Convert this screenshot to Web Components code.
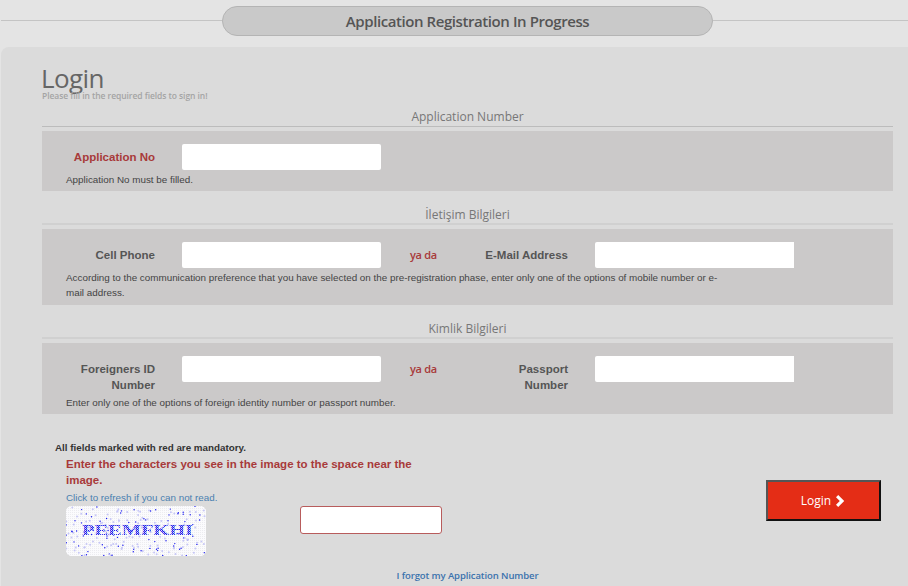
<!DOCTYPE html>
<html>
<head>
<meta charset="utf-8">
<title>Login</title>
<style>
    html, body { margin: 0; padding: 0; background: #e4e4e4; height: 586px; overflow: hidden; }
    body { font-family: "Liberation Sans", Arial, sans-serif; }
</style>
</head>
<body>
<progress-header>Application Registration In Progress</progress-header>
<login-panel heading="Login" sub="Please fill in the required fields to sign in!">
    <form-section heading="Application Number" top="6" note="Application No must be filled.">
        <form-field label="Application No" required></form-field>
    </form-section>
    <form-section heading="İletişim Bilgileri" top="14" soft pad="5" note="According to the communication preference that you have selected on the pre-registration phase, enter only one of the options of mobile number or e-mail address.">
        <form-field label="Cell Phone"></form-field>
        <form-field label="E-Mail Address" second></form-field>
    </form-section>
    <form-section heading="Kimlik Bilgileri" top="13.5" soft note="Enter only one of the options of foreign identity number or passport number.">
        <form-field label="Foreigners ID Number"></form-field>
        <form-field label="Passport Number" second></form-field>
    </form-section>
    <captcha-area></captcha-area>
</login-panel>

<script>
// Top bar: rounded title with a line running out on both sides
class ProgressHeader extends HTMLElement {
    constructor() {
        super();
        this.attachShadow({ mode: 'open' });
        this.shadowRoot.innerHTML = `
            <style>
                :host { display: flex; align-items: flex-start; height: 47px; padding-top: 6px; box-sizing: border-box; }
                .line { flex: 1; height: 1px; background: #c4c4c4; margin-top: 14px; }
                .line.start { flex: none; width: 221px; margin-left: 1px; }
                .pill {
                    width: 491px; height: 30px; box-sizing: border-box;
                    background: #c9c9c9; border: 1px solid #b4b4b4; border-radius: 15px;
                    display: flex; align-items: center; justify-content: center;
                    font: 600 15px/1 "Open Sans", sans-serif; letter-spacing: -0.42px; color: #555;
                }
            </style>
            <div class="line start"></div>
            <div class="pill"><slot></slot></div>
            <div class="line"></div>
        `;
    }
}

class LoginPanel extends HTMLElement {
    constructor() {
        super();
        this.attachShadow({ mode: 'open' });
    }

    connectedCallback() {
        this.shadowRoot.innerHTML = `
            <style>
                :host {
                    display: block; margin-left: 1px; height: 539px; box-sizing: border-box;
                    background: #dbdbdb; border-radius: 8px 0 0 0;
                    padding: 16px 15px 0 41px;
                }
                h1 { margin: 0 0 0 -1px; font: 400 26px/30px "Open Sans", sans-serif; letter-spacing: -0.6px; color: #666; }
                p { margin: -3px 0 0; font: 600 8.5px/12px "Open Sans", sans-serif; letter-spacing: -0.07px; color: #a4a4a4; }
            </style>
            <h1>${this.getAttribute('heading')}</h1>
            <p>${this.getAttribute('sub')}</p>
            <slot></slot>
        `;
    }
}

class FormSection extends HTMLElement {
    constructor() {
        super();
        this.attachShadow({ mode: 'open' });
    }

    connectedCallback() {
        const soft = this.hasAttribute('soft');
        this.shadowRoot.innerHTML = `
            <style>
                :host { display: block; margin-top: ${this.getAttribute('top') || 0}px; }
                h2 {
                    margin: 0; height: 18px; text-align: center;
                    font: 400 12px/${soft ? 19 : 17}px "Open Sans", sans-serif; color: #777;
                    border-bottom: ${soft ? '2px solid #d0d0d0' : '1px solid #bcbcbc'};
                }
                .block { margin-top: 4px; background: #cbc9c9; padding: 13px 0 ${this.getAttribute('pad') || 4}px; }
                .row { display: grid; grid-template-columns: repeat(2, max-content); column-gap: 27px; }
                .note {
                    margin: 2px 0 0 24px; width: 655px;
                    font: 9.85px/15px "Liberation Sans", Arial, sans-serif; color: #444;
                }
            </style>
            <h2>${this.getAttribute('heading')}</h2>
            <div class="block">
                <div class="row"><slot></slot></div>
                <div class="note">${this.getAttribute('note')}</div>
            </div>
        `;
    }
}

// Label and input; the second field of a row starts with the "ya da" marker
class FormField extends HTMLElement {
    constructor() {
        super();
        this.attachShadow({ mode: 'open' });
    }

    connectedCallback() {
        const second = this.hasAttribute('second');
        const required = this.hasAttribute('required');
        this.shadowRoot.innerHTML = `
            <style>
                :host { display: flex; align-items: flex-start; }
                .or { width: 26px; margin: 0 44px 0 2px; white-space: nowrap; font: 600 11px/26px "Open Sans", sans-serif; letter-spacing: -0.3px; color: #a83a3a; }
                label {
                    width: ${second ? 88 : 113}px; text-align: right; padding-top: 5px; box-sizing: border-box;
                    font: bold 11.5px/16px "Liberation Sans", Arial, sans-serif;
                    color: ${required ? '#a83a3a' : '#555'};
                }
                input {
                    width: 199px; height: 26px; margin: 0 0 0 27px; padding: 0; box-sizing: border-box;
                    background: #fff; border: 0; border-radius: ${second ? '2px 0 0 2px' : '2px'};
                }
            </style>
            ${second ? '<span class="or">ya da</span>' : ''}
            <label>${this.getAttribute('label')}</label>
            <input type="text">
        `;
    }
}

// Captcha picture drawn as svg: fixed-seed noise so every run looks the same
class CaptchaImage extends HTMLElement {
    constructor() {
        super();
        this.attachShadow({ mode: 'open' });
    }

    connectedCallback() {
        let seed = 4711;
        const rnd = () => (seed = (seed * 48271) % 2147483647) / 2147483647;
        let dots = '';
        for (let i = 0; i < 210; i++) {
            const strong = rnd() > 0.62;
            const x = (rnd() * 140).toFixed(1);
            const y = (rnd() * 50).toFixed(1);
            dots += `<circle cx="${x}" cy="${y}" r="${strong ? 0.7 : 1}" fill="${strong ? '#1a1af0' : '#c6c6f6'}"/>`;
        }
        this.shadowRoot.innerHTML = `
            <style>
                :host { display: block; width: 140px; height: 50px; border-radius: 6px; overflow: hidden; background: #fff; }
                svg { display: block; }
                text { font: bold 14px "Liberation Serif", serif; fill: url(#ink); }
            </style>
            <svg width="140" height="50" viewBox="0 0 140 50">
                <defs>
                    <pattern id="grain" width="2" height="2" patternUnits="userSpaceOnUse">
                        <rect width="2" height="2" fill="#fbfbfd"/>
                        <rect width="1" height="1" fill="#ececf0"/>
                    </pattern>
                    <pattern id="ink" width="2" height="2" patternUnits="userSpaceOnUse">
                        <rect width="2" height="2" fill="#1c1ce8"/>
                        <rect x="1" width="1" height="1" fill="#dcdcfa"/>
                        <rect y="1" width="1" height="1" fill="#8c8cf2"/>
                    </pattern>
                </defs>
                <rect width="140" height="50" fill="url(#grain)"/>
                ${dots}
                <text x="16" y="29" textLength="111" lengthAdjust="spacingAndGlyphs">PEEMFKHI</text>
            </svg>
        `;
    }
}

class LoginButton extends HTMLElement {
    constructor() {
        super();
        this.attachShadow({ mode: 'open' });
        this.shadowRoot.innerHTML = `
            <style>
                :host { display: block; }
                button {
                    display: flex; align-items: center; justify-content: center; gap: 4px;
                    width: 115px; height: 41px; padding: 0; box-sizing: border-box;
                    background: #e42d16; color: #fff; cursor: pointer;
                    border: 2px solid; border-color: #555 #111 #111 #555;
                    font: 12px "Open Sans", sans-serif;
                }
                svg { display: block; }
            </style>
            <button>
                <slot></slot>
                <svg width="11" height="14" viewBox="0 0 11 14"><path d="M1 3.2 3.2 1 9.2 7 3.2 13 1 10.8 4.8 7Z" fill="#fff"/></svg>
            </button>
        `;
    }
}

class CaptchaArea extends HTMLElement {
    constructor() {
        super();
        this.attachShadow({ mode: 'open' });
        this.shadowRoot.innerHTML = `
            <style>
                :host { display: block; margin-top: 27.5px; }
                .main { display: flex; align-items: flex-start; }
                .left { width: 400px; flex: none; }
                .mandatory { margin-left: 13px; font: bold 9.8px/14px "Liberation Sans", Arial, sans-serif; color: #333; }
                .enter { margin: 1px 0 0 24px; width: 360px; font: bold 11.5px/16px "Liberation Sans", Arial, sans-serif; color: #a83a3a; }
                .refresh { display: block; margin: 3px 0 0 24px; font: 9.8px/14px "Liberation Sans", Arial, sans-serif; color: #4a7fb0; text-decoration: none; }
                .row { display: flex; align-items: flex-start; margin: 1px 0 0 24px; }
                input {
                    width: 142px; height: 28px; margin: 0 0 0 94px; padding: 0; box-sizing: border-box;
                    background: #fff; border: 1px solid #b85c5c; border-radius: 3px;
                }
                login-button { margin: 39px 12px 0 auto; }
                .forgot {
                    display: block; margin: 13px 0 0; text-align: center; font: 600 9.5px/14px "Open Sans", sans-serif;
                    letter-spacing: -0.1px; color: #3a72ad; text-decoration: none;
                }
            </style>
            <div class="main">
                <div class="left">
                    <div class="mandatory">All fields marked with red are mandatory.</div>
                    <div class="enter">Enter the characters you see in the image to the space near the image.</div>
                    <a class="refresh" href="#">Click to refresh if you can not read.</a>
                    <div class="row">
                        <captcha-image></captcha-image>
                        <input type="text">
                    </div>
                </div>
                <login-button>Login</login-button>
            </div>
            <a class="forgot" href="#">I forgot my Application Number</a>
        `;
    }
}

customElements.define('progress-header', ProgressHeader);
customElements.define('login-panel', LoginPanel);
customElements.define('form-section', FormSection);
customElements.define('form-field', FormField);
customElements.define('captcha-image', CaptchaImage);
customElements.define('login-button', LoginButton);
customElements.define('captcha-area', CaptchaArea);
</script>
</body>
</html>
